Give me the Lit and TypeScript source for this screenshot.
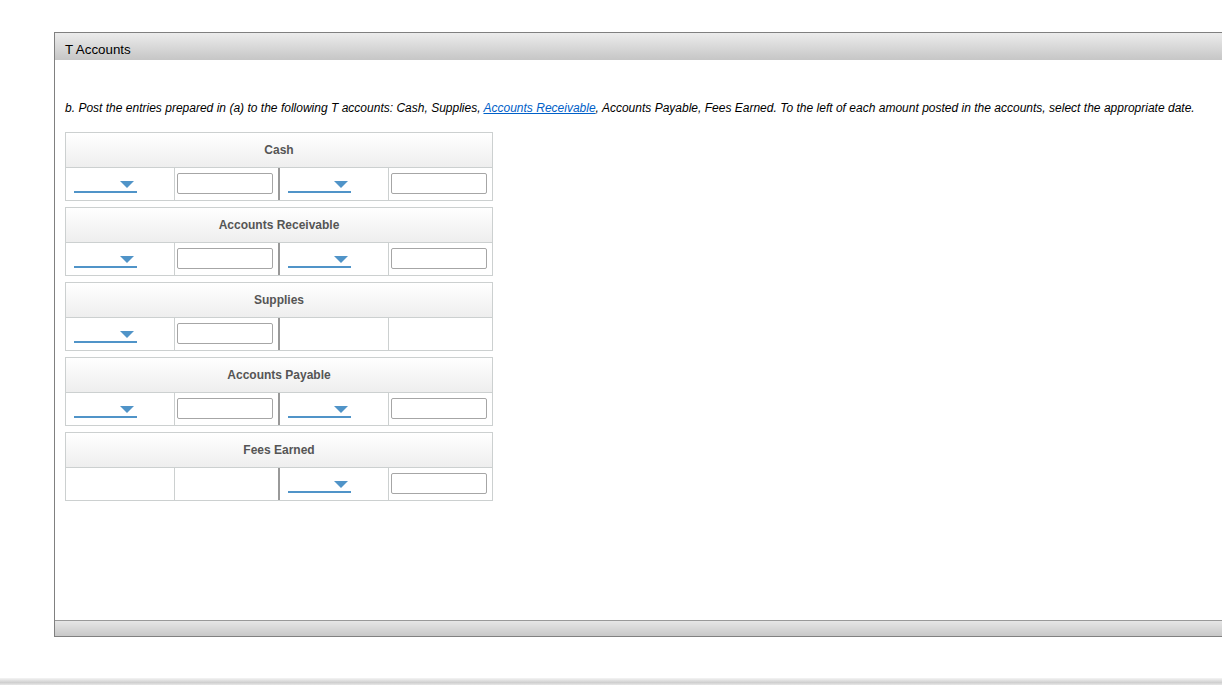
import { LitElement, html, css } from 'lit';
import { customElement } from 'lit/decorators.js';

// each side of a T account: has a date dropdown + amount box, or is blank
const accounts = [
  { name: 'Cash', left: true, right: true },
  { name: 'Accounts Receivable', left: true, right: true },
  { name: 'Supplies', left: true, right: false },
  { name: 'Accounts Payable', left: true, right: true },
  { name: 'Fees Earned', left: false, right: true },
];

@customElement('app-root')
export class AppRoot extends LitElement {
  static styles = css`
    :host {
      display: block;
      width: 1222px;
      height: 687px;
      overflow: hidden;
      background: #fff;
      font-family: "Liberation Sans", Arial, sans-serif;
      color: #000;
    }

    .page {
      padding: 32px 0 0 54px;
    }

    .panel {
      width: 1300px;
      border: 1px solid #808080;
    }

    .panel-head {
      height: 27px;
      padding-left: 10px;
      font-size: 13.33px;
      background: linear-gradient(#ececec, #c6c6c6);
    }

    .panel-head span {
      display: block;
      height: 27px;
      line-height: 33px;
    }

    .panel-body {
      height: 560px;
      box-sizing: border-box;
      padding: 41px 0 0 10px;
    }

    .intro {
      margin: 0 0 17px;
      font-size: 12px;
      line-height: 14px;
      font-style: italic;
      word-spacing: 0.05px;
      white-space: nowrap;
    }

    .intro a {
      color: #0060c8;
    }

    .panel-foot {
      height: 15px;
      border-top: 1px solid #999;
      background: linear-gradient(#e6e6e6, #c8c8c8);
    }

    .accounts {
      display: flex;
      flex-direction: column;
      gap: 6px;
    }

    .account {
      width: 428px;
      box-sizing: border-box;
      border: 1px solid #ccd0d0;
    }

    .account-name {
      height: 34px;
      line-height: 34px;
      text-align: center;
      font-size: 12px;
      font-weight: bold;
      color: #555;
      border-bottom: 1px solid #ccd0d0;
      background: linear-gradient(#ffffff, #eeeeee);
    }

    .row {
      display: grid;
      grid-template-columns: 108px 104px 110px 104px;
      height: 32px;
    }

    .cell {
      box-sizing: border-box;
      border-left: 1px solid #ccd0d0;
    }

    .cell.date {
      padding: 13px 0 0 8px;
    }

    .cell.date:first-child {
      border-left: none;
    }

    .cell.date.t-bar {
      border-left: 2px solid #999;
    }

    .cell.amount {
      padding: 5px 0 0 2px;
    }

    .dropdown {
      display: flex;
      justify-content: flex-end;
      box-sizing: border-box;
      width: 63px;
      height: 12px;
      padding-right: 3px;
      border-bottom: 2px solid #5094c8;
    }

    .arrow {
      width: 0;
      height: 0;
      border-left: 7px solid transparent;
      border-right: 7px solid transparent;
      border-top: 7px solid #5094c8;
    }

    input {
      display: block;
      box-sizing: border-box;
      width: 96px;
      height: 21px;
      margin: 0;
      padding: 0 3px;
      border: 1px solid #a6a6a6;
      border-radius: 2px;
      background: #fff;
    }

    .bottom-rule {
      height: 7px;
      margin-top: 41px;
      background: linear-gradient(#f4f4f4, #cfcfcf 65%, #e8e8e8);
    }
  `;

  renderSide(show: boolean, bar: boolean) {
    if (!show) {
      return html`
        <div class="cell date ${bar ? 't-bar' : ''}"></div>
        <div class="cell amount"></div>
      `;
    }
    return html`
      <div class="cell date ${bar ? 't-bar' : ''}">
        <div class="dropdown"><div class="arrow"></div></div>
      </div>
      <div class="cell amount"><input type="text" /></div>
    `;
  }

  render() {
    return html`
      <div class="page">
        <div class="panel">
          <div class="panel-head"><span>T Accounts</span></div>
          <div class="panel-body">
            <p class="intro">
              b. Post the entries prepared in (a) to the following T accounts: Cash, Supplies,
              <a href="#">Accounts Receivable</a>, Accounts Payable, Fees Earned. To the left of
              each amount posted in the accounts, select the appropriate date.
            </p>
            <div class="accounts">
              ${accounts.map(
                (a) => html`
                  <div class="account">
                    <div class="account-name">${a.name}</div>
                    <div class="row">
                      ${this.renderSide(a.left, false)} ${this.renderSide(a.right, true)}
                    </div>
                  </div>
                `
              )}
            </div>
          </div>
          <div class="panel-foot"></div>
        </div>
      </div>
      <div class="bottom-rule"></div>
    `;
  }
}
